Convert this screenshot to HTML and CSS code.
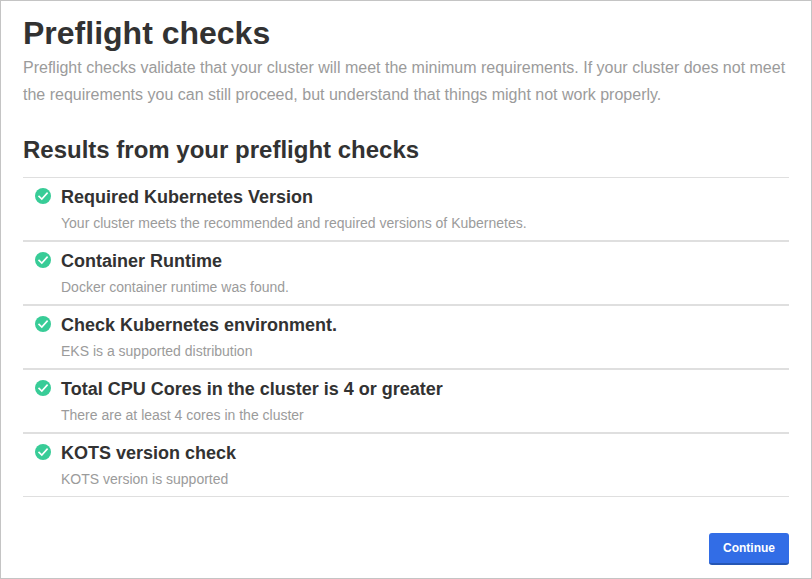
FILE: index.html
```html
<!DOCTYPE html>
<html lang="en">
<head>
<meta charset="utf-8">
<title>Preflight checks</title>
<link rel="stylesheet" href="styles.css">
</head>
<body>
<svg class="defs" width="0" height="0"><symbol id="check" viewBox="0 0 16 16"><circle cx="8" cy="8" r="8" fill="#38cc97"/><path d="M3.5 7.9 6.8 11 12.6 4.6" fill="none" stroke="#fff" stroke-width="1.6"/></symbol></svg>
<main class="page">
  <h1>Preflight checks</h1>
  <p class="intro">Preflight checks validate that your cluster will meet the minimum requirements. If your cluster does not meet the requirements you can still proceed, but understand that things might not work properly.</p>
  <h2>Results from your preflight checks</h2>
  <div class="results">
    <div class="row"><svg class="icon"><use href="#check"/></svg><div><h3>Required Kubernetes Version</h3><p>Your cluster meets the recommended and required versions of Kubernetes.</p></div></div>
    <div class="row"><svg class="icon"><use href="#check"/></svg><div><h3>Container Runtime</h3><p>Docker container runtime was found.</p></div></div>
    <div class="row"><svg class="icon"><use href="#check"/></svg><div><h3>Check Kubernetes environment.</h3><p>EKS is a supported distribution</p></div></div>
    <div class="row"><svg class="icon"><use href="#check"/></svg><div><h3>Total CPU Cores in the cluster is 4 or greater</h3><p>There are at least 4 cores in the cluster</p></div></div>
    <div class="row"><svg class="icon"><use href="#check"/></svg><div><h3>KOTS version check</h3><p>KOTS version is supported</p></div></div>
  </div>
  <div class="actions"><button class="btn">Continue</button></div>
</main>
</body>
</html>
```
FILE: styles.css
```css
* { box-sizing: border-box; margin: 0; padding: 0; }
body { font-family: "Liberation Sans", Arial, sans-serif; background: #fff; color: #323232; }
.defs { display: none; }
.page { height: 579px; border: 1px solid #c4c4c4; padding: 12px 22px 0; }
h1 { font-size: 32px; line-height: 40px; }
.intro { margin-top: 1px; font-size: 16px; line-height: 27px; color: #9b9b9b; }
h2 { font-size: 24px; line-height: 30px; margin: 27px 0 12px; }
.results { border-top: 1px solid #dfdfdf; border-bottom: 1px solid #dfdfdf; }
.row { display: flex; gap: 10px; height: 64px; padding: 9px 12px 0; border-bottom: 2px solid #dfdfdf; }
.row:last-child { height: 62px; border-bottom: 0; }
.icon { width: 16px; height: 16px; flex: none; margin-top: 1px; }
h3 { font-size: 18px; line-height: 20px; }
.row p { font-size: 14px; line-height: 20px; margin-top: 6px; color: #9b9b9b; }
.actions { display: flex; justify-content: flex-end; margin-top: 36px; }
.btn { width: 80px; height: 32px; border: 0; border-bottom: 2px solid #2556b4; border-radius: 3px; background: #326de6; color: #fff; font: bold 12px "Liberation Sans", Arial, sans-serif; }
```
